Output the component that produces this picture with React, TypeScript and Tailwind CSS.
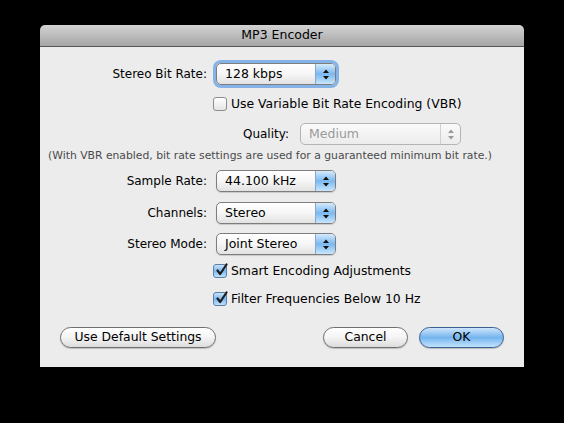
import React from 'react';

const font = { fontFamily: '"Lucida Grande", "DejaVu Sans", sans-serif' };

function Arrows({ dim }: { dim?: boolean }) {
  const c = dim ? '#9a9a9a' : '#111';
  return (
    <svg width="8" height="11" viewBox="0 0 8 11">
      <path d="M4 0.5 L7 4 L1 4 Z" fill={c} />
      <path d="M4 10.5 L7 7 L1 7 Z" fill={c} />
    </svg>
  );
}

function Popup({ value, focus }: { value: string; focus?: boolean }) {
  return (
    <div
      className={`flex h-[22px] w-[120px] rounded-[5px] border border-[#7d7d7d] overflow-hidden bg-gradient-to-b from-white via-[#f6f6f6] to-[#e2e2e2] ${
        focus ? 'shadow-[0_0_0_3px_rgba(100,160,230,0.75)]' : 'shadow-[0_1px_1px_rgba(0,0,0,0.15)]'
      }`}
    >
      <div className="flex-1 pl-[8px] text-[12.5px] leading-[20px] text-black">{value}</div>
      <div className="flex w-[20px] items-center justify-center border-l border-[#8aa9c9] bg-gradient-to-b from-[#d6ebfb] via-[#79b8ef] to-[#c9e6fc]">
        <Arrows />
      </div>
    </div>
  );
}

function Checkbox({ checked, label }: { checked?: boolean; label: string }) {
  return (
    <div className="flex h-[18px] items-center pl-[173px]">
      <div
        className={`relative h-[14px] w-[14px] rounded-[3px] border ${
          checked
            ? 'border-[#5b7fa8] bg-gradient-to-b from-[#c7e2fa] via-[#7ab8ee] to-[#bfe0fb]'
            : 'border-[#8c8c8c] bg-gradient-to-b from-white to-[#e4e4e4]'
        }`}
      >
        {checked && (
          <svg className="absolute left-[1px] top-[-2px]" width="13" height="14" viewBox="0 0 13 14">
            <path d="M2.5 7.5 L5.2 11 L11.5 1.5" fill="none" stroke="#1c1c1c" strokeWidth="2.2" strokeLinecap="round" strokeLinejoin="round" />
          </svg>
        )}
      </div>
      <span className="ml-[4px] text-[12.4px] text-black">{label}</span>
    </div>
  );
}

function Row({ label, value, focus, className }: { label: string; value: string; focus?: boolean; className: string }) {
  return (
    <div className={`flex h-[22px] items-center ${className}`}>
      <div className="w-[167px] text-right text-[12px] text-black">{label}</div>
      <div className="ml-[9px]">
        <Popup value={value} focus={focus} />
      </div>
    </div>
  );
}

function PillButton({ children, width, blue }: { children: React.ReactNode; width: string; blue?: boolean }) {
  return (
    <div
      className={`flex h-[21px] ${width} items-center justify-center rounded-full border text-[12.4px] text-black ${
        blue
          ? 'border-[#3b5f8f] bg-gradient-to-b from-[#cfe6fb] via-[#74b4ee] to-[#c2e3fc]'
          : 'border-[#6f6f6f] bg-gradient-to-b from-white via-[#f4f4f4] to-[#dcdcdc]'
      } shadow-[0_1px_1px_rgba(0,0,0,0.2)]`}
    >
      {children}
    </div>
  );
}

export default function App() {
  return (
    <div className="h-[423px] w-[564px] bg-black pl-[40px] pt-[25px]" style={font}>
      <div className="w-[484px]">
        <div className="flex h-[22px] items-center justify-center rounded-t-[5px] border-b border-[#555] bg-gradient-to-b from-[#d3d3d3] to-[#a5a5a5] text-[12.5px] text-black">
          MP3 Encoder
        </div>
        <div className="flex h-[320px] flex-col bg-[#ececec]">
          <Row label="Stereo Bit Rate:" value="128 kbps" focus className="mt-[16px]" />
          <div className="mt-[10px]">
            <Checkbox label="Use Variable Bit Rate Encoding (VBR)" />
          </div>
          <div className="mt-[10px] flex h-[22px] items-center">
            <div className="w-[249px] text-right text-[12px] text-black">Quality:</div>
            <div className="ml-[11px] flex h-[22px] w-[161px] rounded-[5px] border border-[#b4b4b4] bg-gradient-to-b from-[#fafafa] to-[#ececec]">
              <div className="flex-1 pl-[8px] text-[12.5px] leading-[20px] text-[#9a9a9a]">Medium</div>
              <div className="flex w-[20px] items-center justify-center border-l border-[#d0d0d0]">
                <Arrows dim />
              </div>
            </div>
          </div>
          <div className="mt-[4px] h-[14px] pl-[8px] text-[10.8px] leading-[14px] text-[#4a4a4a]">
            (With VBR enabled, bit rate settings are used for a guaranteed minimum bit rate.)
          </div>
          <Row label="Sample Rate:" value="44.100 kHz" className="mt-[7px]" />
          <Row label="Channels:" value="Stereo" className="mt-[10px]" />
          <Row label="Stereo Mode:" value="Joint Stereo" className="mt-[9px]" />
          <div className="mt-[7px]">
            <Checkbox checked label="Smart Encoding Adjustments" />
          </div>
          <div className="mt-[10px]">
            <Checkbox checked label="Filter Frequencies Below 10 Hz" />
          </div>
          <div className="mt-[19px] flex items-center pl-[20px] pr-[20px]">
            <PillButton width="w-[156px]">Use Default Settings</PillButton>
            <div className="flex-1" />
            <PillButton width="w-[85px]">Cancel</PillButton>
            <div className="ml-[11px]">
              <PillButton width="w-[85px]" blue>
                OK
              </PillButton>
            </div>
          </div>
        </div>
      </div>
    </div>
  );
}
